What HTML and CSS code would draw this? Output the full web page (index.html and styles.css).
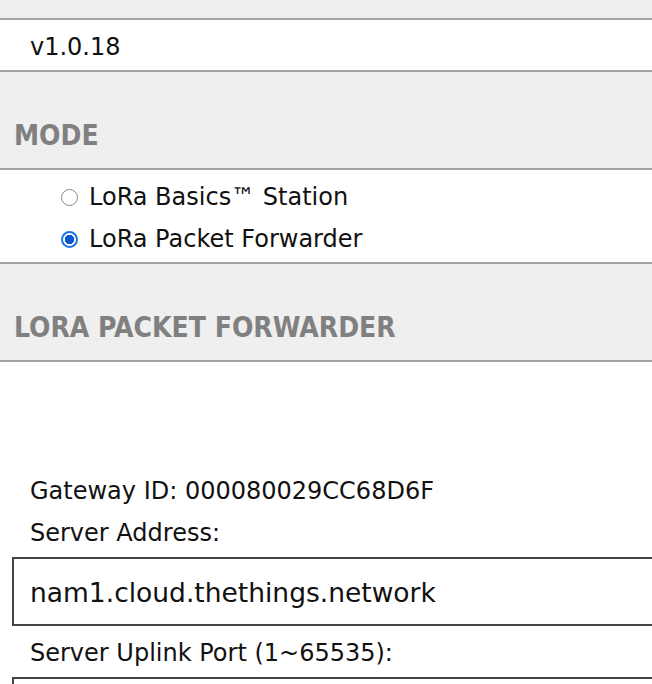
FILE: index.html
```html
<!DOCTYPE html>
<html>
<head>
<meta charset="utf-8">
<link rel="stylesheet" href="styles.css">
</head>
<body>
<div class="band"></div>
<div class="value-row">v1.0.18</div>
<div class="section-head"><h2>MODE</h2></div>
<div class="modes">
  <label class="opt"><input type="radio" name="mode" class="radio"> LoRa Basics™ Station</label>
  <label class="opt"><input type="radio" name="mode" class="radio" checked> LoRa Packet Forwarder</label>
</div>
<div class="section-head"><h2>LORA PACKET FORWARDER</h2></div>
<div class="form">
  <div class="line">Gateway ID: 000080029CC68D6F</div>
  <div class="line">Server Address:</div>
  <div class="field">nam1.cloud.thethings.network</div>
  <div class="line">Server Uplink Port (1~65535):</div>
  <div class="field"></div>
</div>
</body>
</html>
```
FILE: styles.css
```css
html, body {
  margin: 0;
  padding: 0;
  background: #fff;
  font-family: "DejaVu Sans", sans-serif;
  font-size: 24px;
  color: #111;
  overflow: hidden;
}
.band {
  height: 18px;
  background: #efefef;
}
.value-row {
  border-top: 2px solid #a3a3a3;
  border-bottom: 2px solid #a3a3a3;
  height: 50px;
  line-height: 54px;
  padding-left: 30px;
}
.section-head {
  background: #efefef;
  height: 96px;
  display: flex;
  align-items: flex-end;
  padding-left: 14px;
  border-bottom: 2px solid #a3a3a3;
}
.section-head h2 {
  margin: 0 0 17px 0;
  font-family: "DejaVu Sans Condensed", "DejaVu Sans", sans-serif;
  font-size: 28px;
  font-weight: bold;
  color: #808080;
  line-height: 30px;
}
.modes {
  height: 88px;
  padding-top: 4px;
  border-bottom: 2px solid #a3a3a3;
  display: flex;
  flex-direction: column;
  justify-content: center;
  padding-left: 61px;
}
.opt {
  display: flex;
  align-items: center;
  gap: 11px;
  height: 42px;
}
.radio {
  appearance: none;
  -webkit-appearance: none;
  margin: 0;
  width: 17px;
  height: 17px;
  border: 1.5px solid #8a8a8a;
  border-radius: 50%;
  box-sizing: border-box;
  background: #fff;
}
.radio:checked {
  border: 2px solid #1a73e8;
  background: radial-gradient(circle, #0b57d0 0 4.5px, #fff 5px);
}
.form {
  padding: 108px 0 0 12px;
}
.line {
  padding-left: 18px;
  height: 42px;
  line-height: 42px;
}
.field {
  border: 2px solid #444;
  border-right: none;
  height: 65px;
  line-height: 68px;
  padding-left: 16px;
  margin: 3px 0 6px 0;
  font-size: 26.5px;
}
```
